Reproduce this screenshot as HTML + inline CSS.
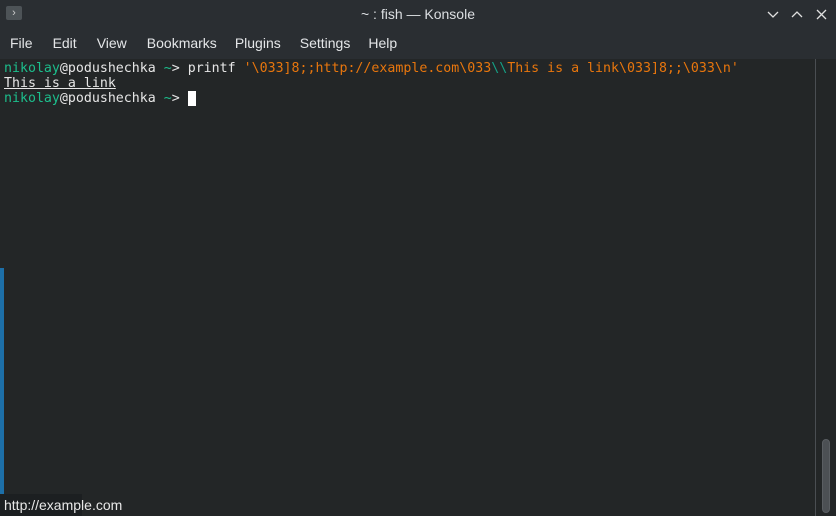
<!DOCTYPE html><html><head><style>
body{margin:0;width:836px;height:516px;overflow:hidden;background:#232627;font-family:"Liberation Sans",sans-serif;position:relative}
.tb{position:absolute;left:0;top:0;width:836px;height:59px;background:#2a2e32}
.title{position:absolute;top:6px;width:836px;text-align:center;color:#dcdfe2;font-size:14px}
.menu{position:absolute;top:35px;left:10px;color:#e4e6e8;font-size:14px}
.menu span{margin-right:18px}
.term{position:absolute;left:4px;top:61px;font-family:"DejaVu Sans Mono",monospace;font-size:13.28px;line-height:15px;color:#e6e6e6;white-space:pre}
.g{color:#1cbe8c}.o{color:#e8760d}.t{color:#16a085}
</style></head><body>
<div class="tb"></div>
<div style="position:absolute;left:6px;top:6px;width:16px;height:14px;background:#4d5357;border-radius:2px;color:#ccc;font-size:11px;line-height:14px;text-align:center">›</div>
<div class="title">~ : fish — Konsole</div>
<svg style="position:absolute;left:766px;top:8px" width="64" height="14" fill="none" stroke="#e0e0e0" stroke-width="1.3"><path d="M2 4l5 5 5-5"/><path d="M26 9l5-5 5 5"/><path d="M51 2l9 9M60 2l-9 9"/></svg>
<div class="menu"><span style="margin-right:20px">File</span><span style="margin-right:20px">Edit</span><span style="margin-right:20px">View</span><span>Bookmarks</span><span style="margin-right:19px">Plugins</span><span>Settings</span><span>Help</span></div>
<div class="term"><span class="g">nikolay</span>@podushechka <span class="g">~</span>&gt; printf <span class="o">'\033]8;;http://example.com\033</span><span class="t">\\</span><span class="o">This is a link\033]8;;\033\n'</span>
<span style="text-decoration:underline">This is a link</span>
<span class="g">nikolay</span>@podushechka <span class="g">~</span>&gt; <span style="background:#fff"> </span></div>
<div style="position:absolute;left:815px;top:59px;width:1px;height:457px;background:#4a4e52"></div>
<div style="position:absolute;left:822px;top:439px;width:8px;height:74px;background:#4c5054;border-radius:4px;border:1px solid #5a5e62;box-sizing:border-box"></div>
<div style="position:absolute;left:0;top:268px;width:4px;height:227px;background:#1d6fa8"></div>
<div style="position:absolute;left:0;top:494px;width:82px;height:22px;background:#1c1f21;color:#e8e8e8;font-size:14px;line-height:22px;padding-left:4px;box-sizing:border-box;white-space:nowrap;overflow:visible">http://example.com</div>
</body></html>
